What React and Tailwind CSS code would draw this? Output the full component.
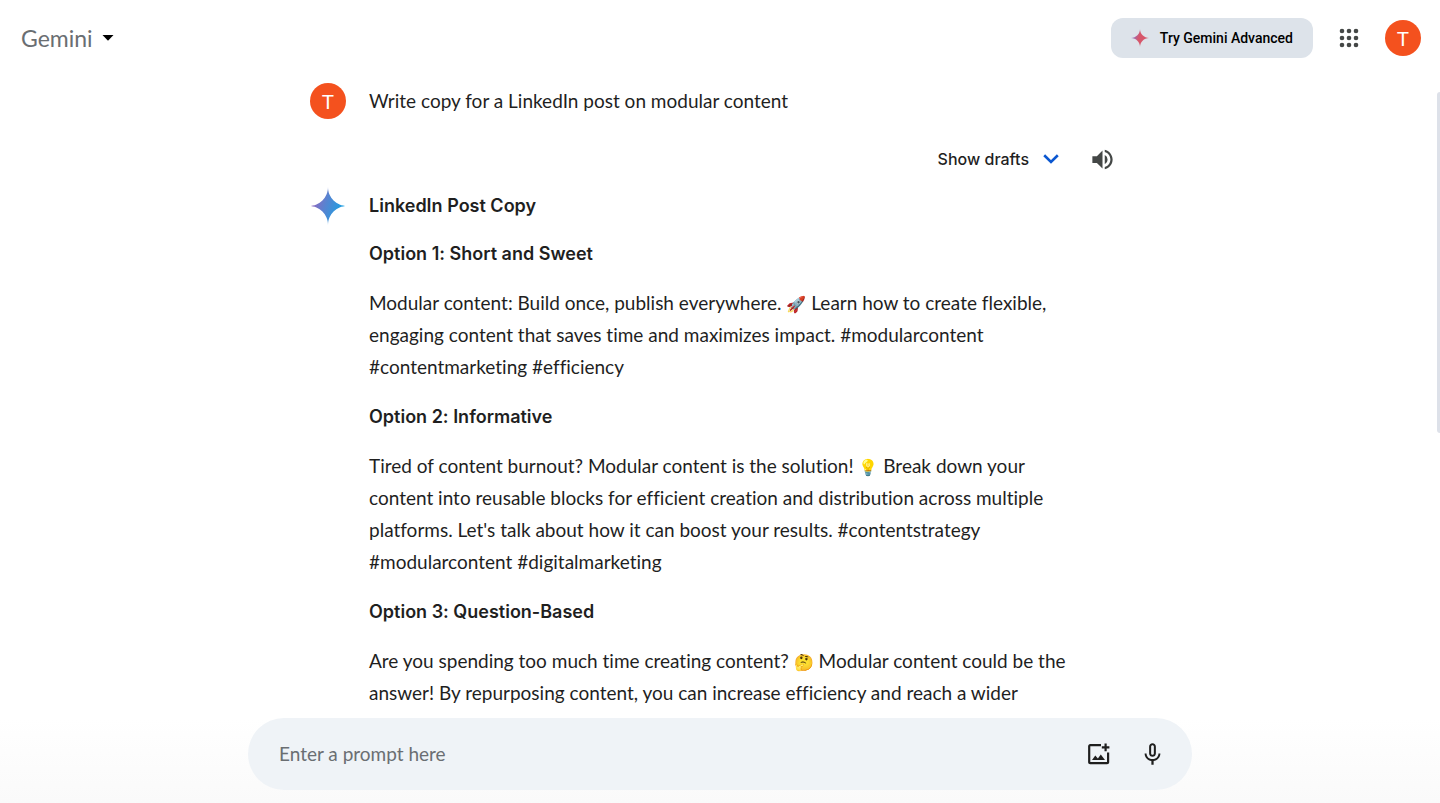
import { useState } from "react";
import { MdMicNone, MdVolumeUp } from "react-icons/md";

const answers = [
  {
    title: "Option 1: Short and Sweet",
    before: "Modular content: Build once, publish everywhere.",
    emoji: "🚀",
    after:
      "Learn how to create flexible, engaging content that saves time and maximizes impact. #modularcontent #contentmarketing #efficiency",
  },
  {
    title: "Option 2: Informative",
    before: "Tired of content burnout? Modular content is the solution!",
    emoji: "💡",
    after:
      "Break down your content into reusable blocks for efficient creation and distribution across multiple platforms. Let's talk about how it can boost your results. #contentstrategy #modularcontent #digitalmarketing",
  },
  {
    title: "Option 3: Question-Based",
    before: "Are you spending too much time creating content?",
    emoji: "🤔",
    after:
      "Modular content could be the answer! By repurposing content, you can increase efficiency and reach a wider audience. Want to learn more? Let's connect! #contentstrategy",
  },
];

const Sparkle = ({ id, colors, className }) => (
  <svg viewBox="0 0 28 28" className={className} aria-hidden="true">
    <defs>
      <linearGradient id={id} x1="0" y1="0.3" x2="1" y2="0.6">
        <stop offset="0.1" stopColor={colors[0]} />
        <stop offset="0.45" stopColor={colors[1]} />
        <stop offset="0.9" stopColor={colors[2]} />
      </linearGradient>
    </defs>
    <path
      fill={`url(#${id})`}
      d="M14 28C14 26.06 13.63 24.24 12.88 22.54C12.16 20.84 11.17 19.36 9.9 18.1C8.65 16.84 7.16 15.84 5.46 15.12C3.76 14.37 1.94 14 0 14C1.94 14 3.76 13.64 5.46 12.92C7.16 12.17 8.65 11.17 9.9 9.9C11.17 8.65 12.16 7.16 12.88 5.46C13.63 3.76 14 1.94 14 0C14 1.94 14.36 3.76 15.09 5.46C15.83 7.16 16.84 8.65 18.1 9.9C19.36 11.17 20.84 12.17 22.54 12.92C24.24 13.64 26.06 14 28 14C26.06 14 24.24 14.37 22.54 15.12C20.84 15.84 19.36 16.84 18.1 18.1C16.84 19.36 15.83 20.84 15.09 22.54C14.36 24.24 14 26.06 14 28Z"
    />
  </svg>
);

const AppsIcon = () => (
  <svg viewBox="0 0 20 20" className="size-5" fill="#444746" aria-hidden="true">
    {[3, 10, 17].map((cy) =>
      [3, 10, 17].map((cx) => <circle key={`${cx}-${cy}`} cx={cx} cy={cy} r="2.3" />)
    )}
  </svg>
);

const AddImageIcon = () => (
  <svg viewBox="0 0 24 24" className="size-6" fill="none" stroke="#1f1f1f" strokeWidth="2.2" aria-hidden="true">
    <path d="M14 3.2H3.2a1 1 0 0 0-1 1v16a1 1 0 0 0 1 1h16.9a1 1 0 0 0 1-1V10.6" />
    <path d="M18.6 1.6v7.6M14.8 5.4h7.6" />
    <path d="M5 18l3.3-4.4 2.6 3L13.8 12.4 18 18z" fill="#1f1f1f" stroke="none" />
  </svg>
);

const Avatar = () => (
  <span className="flex size-9 shrink-0 items-center justify-center rounded-full bg-[#f4511e] text-xl text-white">
    T
  </span>
);

const Header = () => (
  <header className="flex h-19 shrink-0 items-center justify-between pr-[19px] pl-[21px]">
    <button type="button" className="flex items-center gap-[9px] text-[23px] text-[#6a6e72]">
      Gemini
      <svg viewBox="0 0 12 6" className="h-[6px] w-3" aria-hidden="true">
        <path d="M0.5 0h11L6 5.8z" fill="#000" />
      </svg>
    </button>
    <div className="flex items-center gap-[26px]">
      <button
        type="button"
        className="flex h-10 items-center gap-[11px] rounded-xl bg-[#dde3ea] px-5 font-['Roboto',sans-serif] text-sm font-medium text-black"
      >
        <Sparkle id="advanced" colors={["#8e6fc4", "#d6576b", "#d6576b"]} className="size-[18px]" />
        Try Gemini Advanced
      </button>
      <button type="button" aria-label="Google apps">
        <AppsIcon />
      </button>
      <button type="button" aria-label="Account">
        <Avatar />
      </button>
    </div>
  </header>
);

const PromptBar = () => {
  const [prompt, setPrompt] = useState("");

  return (
    <footer className="shrink-0 bg-linear-to-b from-white to-[#fafafa] px-4 pb-[13px]">
      <form
        onSubmit={(e) => e.preventDefault()}
        className="mx-auto flex h-18 max-w-[944px] items-center gap-7 rounded-full bg-[#eff3f7] pr-[26px] pl-[31px]"
      >
        <input
          type="text"
          aria-label="Prompt"
          value={prompt}
          onChange={(e) => setPrompt(e.target.value)}
          placeholder="Enter a prompt here"
          className="min-w-0 flex-1 bg-transparent text-[19px] text-[#1f1f1f] outline-none placeholder:text-[#6a6e72]"
        />
        <button type="button" aria-label="Upload image">
          <AddImageIcon />
        </button>
        <button type="button" aria-label="Use microphone">
          <MdMicNone className="size-[27px] text-[#1f1f1f]" />
        </button>
      </form>
    </footer>
  );
};

const App = () => {
  return (
    <div className="relative flex h-screen flex-col bg-white font-['Lato',sans-serif] text-[#1f1f1f] [font-variant-ligatures:none]">
      <Header />

      <main className="min-h-0 flex-1 overflow-y-auto px-4 pt-[7px] [scrollbar-width:none]">
        <div className="mx-auto max-w-[820px] text-[19px] leading-8">
          <div className="flex items-center gap-[23px]">
            <Avatar />
            <p>Write copy for a LinkedIn post on modular content</p>
          </div>

          <div className="mt-5 flex h-10 items-center justify-end gap-[30px] pr-[14px]">
            <button
              type="button"
              className="flex items-center gap-[14px] font-['Inter',sans-serif] text-base font-medium"
            >
              Show drafts
              <svg viewBox="0 0 16 10" className="h-[10px] w-4" fill="none" aria-hidden="true">
                <path d="M1.2 1.3L8 8l6.8-6.7" stroke="#0b57d0" strokeWidth="2.6" />
              </svg>
            </button>
            <button type="button" aria-label="Listen">
              <MdVolumeUp className="size-[27px] text-[#444746]" />
            </button>
          </div>

          <div className="mt-[11px] flex items-start gap-[23px]">
            <span className="flex h-8 w-9 shrink-0 items-center justify-center">
              <Sparkle id="gemini" colors={["#9168c0", "#5684d1", "#1ba1e3"]} className="size-[38px] shrink-0" />
            </span>
            <div className="max-w-[720px]">
              <h2 className="mb-4 font-['Inter',sans-serif] text-lg leading-8 font-semibold">LinkedIn Post Copy</h2>
              {answers.map((answer) => (
                <section key={answer.title} className="mb-[18px]">
                  <h3 className="mb-[17px] font-['Inter',sans-serif] text-lg leading-8 font-semibold">
                    {answer.title}
                  </h3>
                  <p>
                    {answer.before} <span className="text-base leading-4">{answer.emoji}</span> {answer.after}
                  </p>
                </section>
              ))}
            </div>
          </div>
        </div>
      </main>

      {/* Scroll thumb */}
      <div className="absolute top-[92px] right-0 h-[341px] w-[3px] rounded-l bg-[#dde1e9]" />

      <PromptBar />
    </div>
  );
};

export default App;
